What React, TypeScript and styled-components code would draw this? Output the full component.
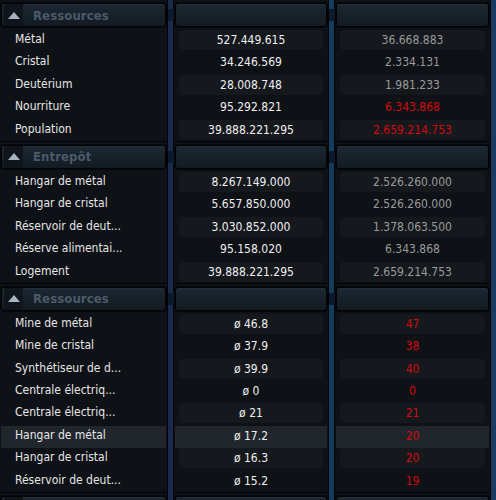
import React from "react";
import styled, { createGlobalStyle } from "styled-components";

const Global = createGlobalStyle`
  html, body { margin: 0; padding: 0; background: #0b1626; }
  body {
    font-family: "DejaVu Sans Condensed", "DejaVu Sans", "Liberation Sans", sans-serif;
    font-stretch: condensed;
    -webkit-font-smoothing: antialiased;
  }
`;

const Page = styled.div`
  width: 496px;
  height: 500px;
  overflow: hidden;
  display: flex;
  flex-direction: column;
  background: linear-gradient(90deg, #1a2346 0%, #1b2a4c 34%, #14395a 60%, #133f5f 70%, #1b3a62 100%);
`;

const Section = styled.section`
  flex-shrink: 0;
  display: grid;
  grid-template-columns: 167px 154px 155px;
  column-gap: 7px;
`;

const Column = styled.div`
  position: relative;
  background: #0e1116;
  box-shadow: 0 0 0 1px #020306, inset 0 -1px 0 #1a1e25;
  padding: 3px 1px 0;
  box-sizing: border-box;
`;

const Header = styled.div<{ $connector?: boolean }>`
  position: relative;
  height: 24px;
  box-sizing: border-box;
  border: 1px solid #020304;
  border-radius: 3px;
  background: linear-gradient(180deg, #1d2832 0%, #17212a 50%, #131a22 100%);
  box-shadow: inset 0 1px 0 rgba(120, 150, 180, 0.08), 0 0 0 1px #07090c;
  margin-bottom: 3px;
  display: flex;
  align-items: stretch;
  ${(p) =>
    p.$connector &&
    `
    &::before {
      content: "";
      position: absolute;
      left: -10px;
      top: 5px;
      width: 6px;
      height: 12px;
      border-left: 2px solid #020304;
      border-right: 2px solid #020304;
      background: #0d1a2c;
    }
  `}
`;

const Toggle = styled.div`
  width: 19px;
  margin: 0 0 0 2px;
  background: #0f151b;
  border-radius: 2px 0 0 2px;
  display: flex;
  align-items: center;
  justify-content: center;
`;

const Title = styled.span`
  margin-left: 10px;
  align-self: center;
  font-family: "DejaVu Sans Condensed", "DejaVu Sans", sans-serif;
  font-weight: bold;
  font-size: 13px;
  color: #4b5a69;
  letter-spacing: 0.1px;
`;

const Row = styled.div<{ $hl?: boolean }>`
  height: 22.4px;
  background: ${(p) => (p.$hl ? "#21262d" : "transparent")};
`;

const Label = styled.div`
  height: 20px;
  line-height: 19px;
  padding-left: 14px;
  font-size: 12px;
  color: #e6e6e6;
  white-space: nowrap;
`;

const Cell = styled.div<{ $striped?: boolean; $tone: "white" | "gray" | "red" }>`
  height: 20px;
  margin: 0 4px;
  border-radius: 4px;
  background: ${(p) => (p.$striped ? "#15181d" : "transparent")};
  display: flex;
  align-items: center;
  justify-content: center;
  font-size: 12px;
  color: ${(p) => (p.$tone === "white" ? "#efefef" : p.$tone === "gray" ? "#9a9a9a" : "#d20b0b")};
  white-space: nowrap;
`;

type Tone = "white" | "gray" | "red";
type Item = { label: string; a: string; b: string; bTone: Tone; hl?: boolean };
type Block = { title: string; rows: Item[] };

const blocks: Block[] = [
  {
    title: "Ressources",
    rows: [
      { label: "Métal", a: "527.449.615", b: "36.668.883", bTone: "gray" },
      { label: "Cristal", a: "34.246.569", b: "2.334.131", bTone: "gray" },
      { label: "Deutérium", a: "28.008.748", b: "1.981.233", bTone: "gray" },
      { label: "Nourriture", a: "95.292.821", b: "6.343.868", bTone: "red" },
      { label: "Population", a: "39.888.221.295", b: "2.659.214.753", bTone: "red" },
    ],
  },
  {
    title: "Entrepôt",
    rows: [
      { label: "Hangar de métal", a: "8.267.149.000", b: "2.526.260.000", bTone: "gray" },
      { label: "Hangar de cristal", a: "5.657.850.000", b: "2.526.260.000", bTone: "gray" },
      { label: "Réservoir de deut...", a: "3.030.852.000", b: "1.378.063.500", bTone: "gray" },
      { label: "Réserve alimentai...", a: "95.158.020", b: "6.343.868", bTone: "gray" },
      { label: "Logement", a: "39.888.221.295", b: "2.659.214.753", bTone: "gray" },
    ],
  },
  {
    title: "Ressources",
    rows: [
      { label: "Mine de métal", a: "ø 46.8", b: "47", bTone: "red" },
      { label: "Mine de cristal", a: "ø 37.9", b: "38", bTone: "red" },
      { label: "Synthétiseur de d...", a: "ø 39.9", b: "40", bTone: "red" },
      { label: "Centrale électriq...", a: "ø 0", b: "0", bTone: "red" },
      { label: "Centrale électriq...", a: "ø 21", b: "21", bTone: "red" },
      { label: "Hangar de métal", a: "ø 17.2", b: "20", bTone: "red", hl: true },
      { label: "Hangar de cristal", a: "ø 16.3", b: "20", bTone: "red" },
      { label: "Réservoir de deut...", a: "ø 15.2", b: "19", bTone: "red" },
    ],
  },
  { title: "", rows: [] },
];

const Triangle = () => (
  <svg width="12" height="7" viewBox="0 0 12 7">
    <path d="M6 0 L12 7 L0 7 Z" fill="#a7b4c0" />
  </svg>
);

function SectionView({ block }: { block: Block }) {
  return (
    <Section>
      <Column>
        <Header>
          <Toggle>
            <Triangle />
          </Toggle>
          <Title>{block.title}</Title>
        </Header>
        {block.rows.map((r, i) => (
          <Row key={i} $hl={r.hl}>
            <Label>{r.label}</Label>
          </Row>
        ))}
      </Column>
      <Column>
        <Header $connector />
        {block.rows.map((r, i) => (
          <Row key={i} $hl={r.hl}>
            <Cell $striped={i % 2 === 0 && !r.hl} $tone="white">
              {r.a}
            </Cell>
          </Row>
        ))}
      </Column>
      <Column>
        <Header $connector />
        {block.rows.map((r, i) => (
          <Row key={i} $hl={r.hl}>
            <Cell $striped={i % 2 === 0 && !r.hl} $tone={r.bTone}>
              {r.b}
            </Cell>
          </Row>
        ))}
      </Column>
    </Section>
  );
}

export default function App() {
  return (
    <>
      <Global />
      <Page>
        {blocks.map((b, i) => (
          <SectionView key={i} block={b} />
        ))}
      </Page>
    </>
  );
}
